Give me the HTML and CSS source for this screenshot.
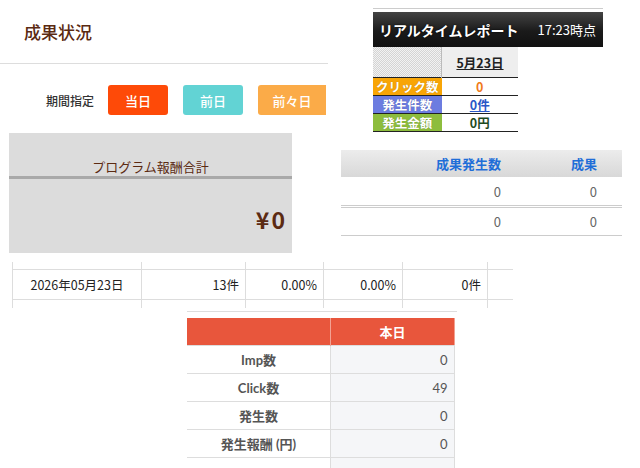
FILE: index.html
```html
<!DOCTYPE html>
<html lang="ja">
<head>
    <meta charset="UTF-8">
    <meta name="viewport" content="width=device-width, initial-scale=1.0">
    <title>成果状況</title>
    <link rel="stylesheet" href="styles.css">
</head>
<body>
    <div class="canvas">

        <!-- 成果状況 / 期間指定 -->
        <section class="piece status">
            <h1 class="status-title">成果状況</h1>
            <div class="period">
                <span class="period-label">期間指定</span>
                <button class="btn btn-red">当日</button>
                <button class="btn btn-teal">前日</button>
                <button class="btn btn-orange">前々日</button>
            </div>
        </section>

        <!-- リアルタイムレポート -->
        <section class="piece realtime">
            <div class="rt-head">
                <span class="rt-title">リアルタイムレポート</span>
                <span class="rt-time">17:23時点</span>
            </div>
            <table class="rt-table">
                <tr>
                    <th class="rt-blank"></th>
                    <th class="rt-date"><a href="#">5月23日</a></th>
                </tr>
                <tr>
                    <td class="rt-label lb-click">クリック数</td>
                    <td class="rt-val val-click">0</td>
                </tr>
                <tr>
                    <td class="rt-label lb-count">発生件数</td>
                    <td class="rt-val val-count"><a href="#">0件</a></td>
                </tr>
                <tr>
                    <td class="rt-label lb-amount">発生金額</td>
                    <td class="rt-val val-amount">0円</td>
                </tr>
            </table>
        </section>

        <!-- プログラム報酬合計 -->
        <section class="piece reward">
            <h2 class="reward-title">プログラム報酬合計</h2>
            <p class="reward-sum">¥0</p>
        </section>

        <!-- 成果発生数 -->
        <section class="piece results">
            <div class="res-row res-head">
                <span></span>
                <span>成果発生数</span>
                <span>成果</span>
            </div>
            <div class="res-row res-first">
                <span></span>
                <span>0</span>
                <span>0</span>
            </div>
            <div class="res-row">
                <span></span>
                <span>0</span>
                <span>0</span>
            </div>
        </section>

        <!-- 日別 -->
        <section class="piece daily">
            <div class="day-cell"><span class="day-in day-date">2026年05月23日</span></div>
            <div class="day-cell"><span class="day-in">13件</span></div>
            <div class="day-cell"><span class="day-in">0.00%</span></div>
            <div class="day-cell"><span class="day-in">0.00%</span></div>
            <div class="day-cell"><span class="day-in">0件</span></div>
            <div class="day-cell"><span class="day-in"></span></div>
        </section>

        <!-- 本日 -->
        <section class="piece today">
            <table class="today-table">
                <tr>
                    <th></th>
                    <th>本日</th>
                    <th class="edge"></th>
                </tr>
                <tr><td class="tl">Imp数</td><td class="tv">0</td><td class="edge"></td></tr>
                <tr><td class="tl">Click数</td><td class="tv">49</td><td class="edge"></td></tr>
                <tr><td class="tl">発生数</td><td class="tv">0</td><td class="edge"></td></tr>
                <tr><td class="tl">発生報酬 (円)</td><td class="tv">0</td><td class="edge"></td></tr>
                <tr><td class="tl"></td><td class="tv"></td><td class="edge"></td></tr>
            </table>
        </section>

    </div>
</body>
</html>
```

FILE: styles.css
```css
body {
    margin: 0;
    padding: 0;
    background: #fff;
    font-family: "Noto Sans CJK JP", "Noto Sans", sans-serif;
    color: #333;
}

.canvas {
    position: relative;
    width: 640px;
    height: 468px;
    overflow: hidden;
}

.piece {
    position: absolute;
}

/* 成果状況 */
.status {
    left: 0;
    top: 0;
    width: 328px;
}

.status-title {
    margin: 0;
    height: 63px;
    padding-left: 24px;
    font-size: 17px;
    font-weight: 500;
    line-height: 63px;
    color: #5b2a12;
    border-bottom: 1px solid #ddd;
}

.period {
    display: flex;
    align-items: center;
    margin-top: 21px;
    padding-left: 46px;
    gap: 15px;
}

.period-label {
    font-size: 12px;
    font-weight: 500;
    color: #333;
    margin-right: -1px;
}

.btn {
    width: 60px;
    height: 30px;
    border: none;
    border-radius: 3px;
    color: #fff;
    font-family: inherit;
    font-size: 13px;
    font-weight: 500;
    padding: 0;
}

.btn-red {
    background: #fe4a08;
}

.btn-teal {
    background: #62d3d4;
}

.btn-orange {
    background: #fbab48;
    width: 68px;
    border-radius: 3px 0 0 3px;
}

/* リアルタイムレポート */
.realtime {
    left: 373px;
    top: 8px;
    width: 230px;
    padding-top: 3px;
    border-top: 1px solid #ccc;
}

.rt-head {
    display: flex;
    align-items: center;
    justify-content: space-between;
    height: 35px;
    padding: 0 7px 0 6px;
    background: linear-gradient(#444, #1a1a1a 55%, #111);
    color: #fff;
}

.rt-title {
    font-size: 14px;
    font-weight: bold;
    text-shadow: 0 0 2px #000;
}

.rt-time {
    font-size: 13px;
}

.rt-table {
    border-collapse: collapse;
    font-size: 12.5px;
    font-weight: bold;
    line-height: 17px;
}

.rt-table th,
.rt-table td {
    padding: 0;
    text-align: center;
}

.rt-blank {
    width: 68px;
    height: 30px;
    border-right: 1px solid #bbb;
    background: repeating-conic-gradient(#d4d4d4 0 25%, #f2f2f2 0 50%) 0 0 / 2px 2px;
}

.rt-date {
    width: 76px;
    background: #eee;
}

.rt-date a {
    color: #222;
}

.rt-label {
    height: 17px;
    color: #fff;
    border-top: 1px solid #222;
    text-shadow: 0 0 1px rgba(0, 0, 0, 0.3);
}

.rt-val {
    border-top: 1px solid #222;
    background: #fff;
}

.rt-table tr:last-child td {
    border-bottom: 1px solid #222;
}

.lb-click {
    background: #f8a506;
}

.lb-count {
    background: #6c7ce0;
}

.lb-amount {
    background: #8dbd3d;
}

.val-click {
    color: #f07a1a;
}

.val-count a {
    color: #2957c7;
}

.val-amount {
    color: #1e4a1e;
}

/* プログラム報酬合計 */
.reward {
    left: 9px;
    top: 133px;
    width: 283px;
    height: 120px;
    background: #dcdcdc;
}

.reward-title {
    margin: 0;
    padding-top: 25px;
    height: 18px;
    font-size: 13px;
    font-weight: normal;
    line-height: 18px;
    text-align: center;
    color: #5b2a12;
    border-bottom: 3px solid #a9a9a9;
}

.reward-sum {
    margin: 25px 5px 0 0;
    font-size: 23px;
    font-weight: bold;
    text-align: right;
    color: #5b2a12;
    line-height: 30px;
    letter-spacing: 2px;
}

/* 成果発生数 */
.results {
    left: 341px;
    top: 150px;
    width: 281px;
}

.res-row {
    display: grid;
    grid-template-columns: 69px 91px 121px;
    height: 27px;
    align-items: center;
    font-size: 13px;
    color: #666;
    border-bottom: 1px solid #ccc;
}

.res-row span {
    text-align: right;
}

.res-row span:nth-child(3) {
    padding-right: 25px;
}

.res-head {
    border-bottom: none;
    background: linear-gradient(#ececec, #d8d8d8);
    color: #1f6ed8;
    font-weight: bold;
}

.res-first {
    height: 28px;
    border-bottom: 3px double #ccc;
}

/* 日別 */
.daily {
    left: 12px;
    top: 262px;
    display: grid;
    grid-template-columns: 129px 104px 78px 79px 85px 26px;
    font-size: 12.5px;
    color: #222;
}

.day-cell {
    border-left: 1px solid #ddd;
    padding: 7px 0 8px;
}

.day-in {
    display: block;
    height: 29px;
    line-height: 29px;
    padding-right: 6px;
    text-align: right;
    border-top: 1px solid #ddd;
    border-bottom: 1px solid #ddd;
}

.day-date {
    text-align: center;
    padding-right: 0;
}

/* 本日 */
.today {
    left: 187px;
    top: 311px;
    width: 270px;
    padding-top: 6px;
    border-top: 1px solid #ddd;
}

.today-table {
    border-collapse: collapse;
    font-family: Lato, "Noto Sans CJK JP", sans-serif;
    font-size: 13px;
    color: #555;
}

.today-table th {
    height: 27px;
    padding: 0;
    background: #e8563c;
    color: #fff;
    font-family: "Noto Sans CJK JP", sans-serif;
    font-weight: bold;
}

.today-table th:first-child {
    width: 143px;
    border-right: 1px solid #f3a293;
}

.today-table th:nth-child(2) {
    width: 123px;
}

.today-table th.edge {
    width: 1px;
    background: #f2a090;
}

.today-table td {
    height: 27px;
    padding: 0;
    border-top: 1px solid #ddd;
}

.tl {
    text-align: center;
    font-weight: bold;
    border-right: 1px solid #ddd;
}

.tv {
    text-align: right;
    padding-right: 6px !important;
    background: #f5f6f8;
}

.today-table td.edge {
    border-left: 1px solid #ddd;
    border-top: none;
}
```
